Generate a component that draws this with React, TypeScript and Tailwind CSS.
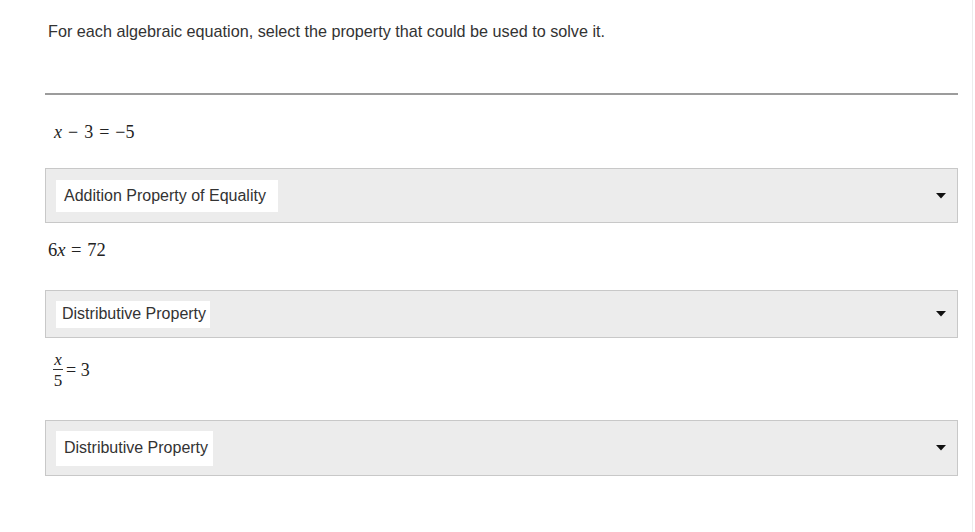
import React from "react";

function Caret() {
  return (
    <svg width="10" height="6" viewBox="0 0 10 6" className="block">
      <path d="M0 0 L10 0 L5 5.5 Z" fill="#111" />
    </svg>
  );
}

function Select({ label, h, boxH, textPl, textPr }: { label: string; h: number; boxH: number; textPl: string; textPr: string }) {
  return (
    <div
      className="w-[913px] border border-[#c8c8c8] bg-[#ececec] flex items-center pl-[10px] pr-[11px] box-border"
      style={{ height: h }}
    >
      <div className={`bg-white flex items-center ${textPl} ${textPr} text-[16px] text-[#333]`} style={{ height: boxH }}>
        {label}
      </div>
      <div className="flex-1" />
      <div>
        <Caret />
      </div>
    </div>
  );
}

export default function App() {
  const serif = { fontFamily: '"Liberation Serif", "DejaVu Serif", serif' };
  return (
    <div
      className="relative w-[975px] h-[532px] bg-white overflow-hidden text-[#333]"
      style={{ fontFamily: '"Liberation Sans", Arial, sans-serif' }}
    >
      <div className="absolute right-[2px] top-0 bottom-0 w-px bg-[#ececec]" />
      <div className="pl-[45px] flex flex-col">
        <div className="pt-[22px] pl-[3px] text-[16.2px] leading-[18px] h-[40px]">
          For each algebraic equation, select the property that could be used to solve it.
        </div>
        <div className="mt-[53px] w-[913px] h-[2px] bg-[#9c9c9c]" />
        <div className="mt-[26px] pl-[9px] h-[22px] text-[18px] leading-[22px] text-[#222] [word-spacing:1.5px]" style={serif}>
          <i>x</i> − 3 = −5
        </div>
        <div className="mt-[25px]">
          <Select label="Addition Property of Equality" h={55} boxH={32} textPl="pl-[8px]" textPr="pr-[12px]" />
        </div>
        <div className="mt-[16px] pl-[3px] h-[22px] text-[18.5px] leading-[22px] text-[#222] [word-spacing:1px]" style={serif}>
          6<i>x</i> = 72
        </div>
        <div className="mt-[29px]">
          <Select label="Distributive Property" h={48} boxH={27} textPl="pl-[6px]" textPr="pr-[4px]" />
        </div>
        <div className="mt-[12px] pl-[8px] h-[40px] flex items-center text-[#222]" style={serif}>
          <div className="flex flex-col items-center text-[17px] leading-[15px]">
            <i className="pb-[2px]">x</i>
            <div className="w-[10px] h-px bg-[#333]" />
            <span className="pt-[3px]">5</span>
          </div>
          <span className="ml-[3px] text-[18px]">= 3</span>
        </div>
        <div className="mt-[30px]">
          <Select label="Distributive Property" h={56} boxH={35} textPl="pl-[8px]" textPr="pr-[5px]" />
        </div>
      </div>
    </div>
  );
}
